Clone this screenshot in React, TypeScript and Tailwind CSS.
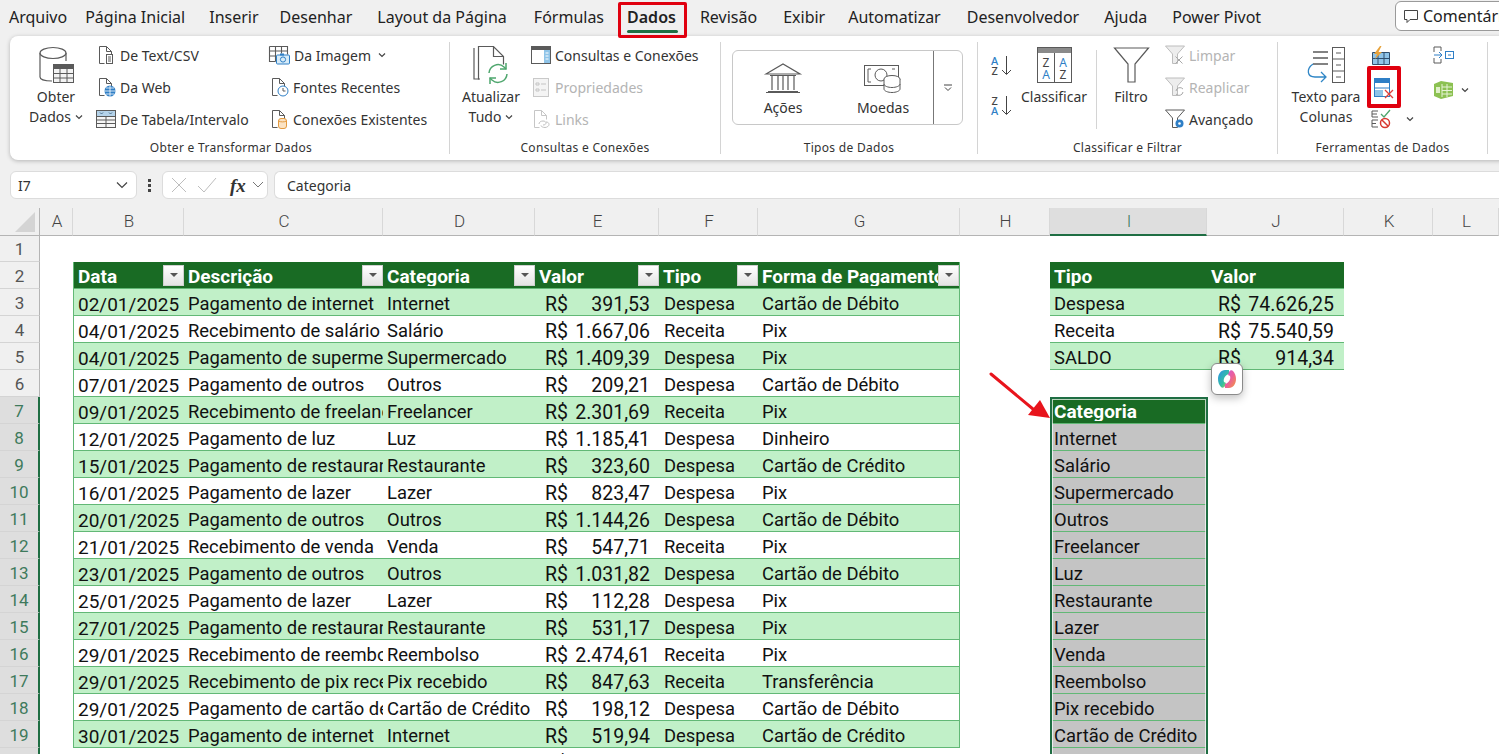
import type { ReactNode } from 'react'

const tabs = [
  ['Arquivo', ''],
  ['Página Inicial', 'ml-[18px]'],
  ['Inserir', 'ml-[24px]'],
  ['Desenhar', 'ml-[21px]'],
  ['Layout da Página', 'ml-[25px]'],
  ['Fórmulas', 'ml-[27px]'],
  ['Dados', 'ml-[23px] font-semibold'],
  ['Revisão', 'ml-[24px]'],
  ['Exibir', 'ml-[26px]'],
  ['Automatizar', 'ml-[23px]'],
  ['Desenvolvedor', 'ml-[26px]'],
  ['Ajuda', 'ml-[25px]'],
  ['Power Pivot', 'ml-[25px]'],
]
const letters = ['A', 'B', 'C', 'D', 'E', 'F', 'G', 'H', 'I', 'J', 'K', 'L']

const rows = [
  ['02/01/2025', 'Pagamento de internet', 'Internet', '391,53', 'Despesa', 'Cartão de Débito'],
  ['04/01/2025', 'Recebimento de salário', 'Salário', '1.667,06', 'Receita', 'Pix'],
  ['04/01/2025', 'Pagamento de supermercado', 'Supermercado', '1.409,39', 'Despesa', 'Pix'],
  ['07/01/2025', 'Pagamento de outros', 'Outros', '209,21', 'Despesa', 'Cartão de Débito'],
  ['09/01/2025', 'Recebimento de freelancer', 'Freelancer', '2.301,69', 'Receita', 'Pix'],
  ['12/01/2025', 'Pagamento de luz', 'Luz', '1.185,41', 'Despesa', 'Dinheiro'],
  ['15/01/2025', 'Pagamento de restaurante', 'Restaurante', '323,60', 'Despesa', 'Cartão de Crédito'],
  ['16/01/2025', 'Pagamento de lazer', 'Lazer', '823,47', 'Despesa', 'Pix'],
  ['20/01/2025', 'Pagamento de outros', 'Outros', '1.144,26', 'Despesa', 'Cartão de Débito'],
  ['21/01/2025', 'Recebimento de venda', 'Venda', '547,71', 'Receita', 'Pix'],
  ['23/01/2025', 'Pagamento de outros', 'Outros', '1.031,82', 'Despesa', 'Cartão de Débito'],
  ['25/01/2025', 'Pagamento de lazer', 'Lazer', '112,28', 'Despesa', 'Pix'],
  ['27/01/2025', 'Pagamento de restaurante', 'Restaurante', '531,17', 'Despesa', 'Pix'],
  ['29/01/2025', 'Recebimento de reembolso', 'Reembolso', '2.474,61', 'Receita', 'Pix'],
  ['29/01/2025', 'Recebimento de pix recebido', 'Pix recebido', '847,63', 'Receita', 'Transferência'],
  ['29/01/2025', 'Pagamento de cartão de crédito', 'Cartão de Crédito', '198,12', 'Despesa', 'Cartão de Débito'],
  ['30/01/2025', 'Pagamento de internet', 'Internet', '519,94', 'Despesa', 'Cartão de Crédito'],
]
const categories = ['Internet', 'Salário', 'Supermercado', 'Outros', 'Freelancer', 'Luz', 'Restaurante', 'Lazer', 'Venda', 'Reembolso', 'Pix recebido', 'Cartão de Crédito']
const summary = [['Despesa', '74.626,25'], ['Receita', '75.540,59'], ['SALDO', '914,34']]

const g = '#5a5a5a'

function Svg({ w, h, children }: { w: number; h: number; children: ReactNode }) {
  return (
    <svg width={w} height={h} viewBox={`0 0 ${w} ${h}`} fill="none" className="shrink-0 overflow-visible">
      {children}
    </svg>
  )
}

function Chevron() {
  return (
    <svg width="8" height="6" viewBox="0 0 8 6" fill="none" className="shrink-0">
      <path d="M1 1.500l3 3 3-3" stroke="#444" strokeWidth="1.200" />
    </svg>
  )
}

const docPath = 'M3.500 1.500h7l5 5v4M3.500 1.500v17h5M10.500 1.500v5h5'

function SmallIcon({ name }: { name: string }) {
  switch (name) {
    case 'csv':
      return <Svg w={20} h={20}><path d={docPath} stroke={g} /><rect x="10.500" y="9.500" width="6" height="9" fill="#fff" stroke={g} /><path d="M12 12h3M12 14h3M12 16h3" stroke={g} /></Svg>
    case 'web':
      return <Svg w={20} h={20}><path d={docPath} stroke={g} /><circle cx="14" cy="14" r="5.500" fill="#2f7fc6" /><path d="M8.500 14h11M14 8.500v11M10 11h8M10 17h8" stroke="#fff" strokeWidth=".8" /></Svg>
    case 'tabela':
      return <Svg w={20} h={20}><rect x=".5" y="1.500" width="19" height="17" fill="#f6f6f6" stroke={g} /><rect x="1" y="2" width="18" height="5" fill="#b5d3ea" /><path d="M.5 7.500h19M.5 11h19M.5 14.500h19M10 7.500v11" stroke={g} /><path d="M4 3.500l1.500 1.500L7 3.500M13 3.500l1.500 1.500L16 3.500" stroke="#4a6f8c" /></Svg>
    case 'imagem':
      return <Svg w={21} h={20}><path d="M.5 1.500h18v8M.5 1.500v15h6M.5 6h18M.5 11h6M6.500 1.500v15M12.500 1.500v7" stroke={g} strokeWidth="1.100" /><rect x="7.500" y="10" width="13" height="9" rx="1" fill="#d8ecf8" stroke="#2f7fc6" /><rect x="11" y="8.500" width="4" height="2" fill="#2f7fc6" /><circle cx="14" cy="14.500" r="2.600" stroke="#2f7fc6" /></Svg>
    case 'recentes':
      return <Svg w={20} h={20}><path d={docPath} stroke={g} /><circle cx="14" cy="14" r="5" fill="#fff" stroke="#2f7fc6" /><path d="M14 11v3h2.500" stroke={g} /></Svg>
    case 'conexoes':
      return <Svg w={20} h={20}><path d={docPath} stroke={g} /><rect x="9.500" y="9.500" width="8" height="10" rx="2.500" fill="#fbe3c4" stroke="#e39a3f" /><path d="M9.500 12c2 1.200 6 1.200 8 0" stroke="#e39a3f" /></Svg>
    case 'consultas':
      return <Svg w={20} h={20}><rect x=".5" y="1.500" width="19" height="17" fill="#fff" stroke={g} /><rect x="1" y="2" width="18" height="3" fill={g} /><rect x="13" y="5" width="6" height="13" fill="#8fc4e8" /><path d="M14.500 8h3M14.500 11h3M14.500 14h3" stroke="#fff" /></Svg>
    case 'propriedades':
      return <Svg w={20} h={20}><rect x="2.500" y="1.500" width="15" height="18" fill="#f4f4f4" stroke="#c9c9c9" /><path d="M5 6h3v2H5zM5 12h3v2H5zM10 7h5M10 13h5" stroke="#c4c4c4" /></Svg>
    case 'links':
      return <Svg w={20} h={20}><path d={docPath} stroke="#c6c6c6" /><path d="M8 15c0-2 2-3 4-3s3 1 3 2-1 2-3 2M15 13c2 0 3 1 3 2.500s-2 3-4 3-4-1-4-2" stroke="#c0c0c0" /></Svg>
    case 'limpar':
      return <Svg w={20} h={20}><path d="M.5 1h19l-7 8v9.500h-5V9z" fill="#ededed" stroke="#bdbdbd" /><path d="M10.500 11.500l7 7M17.500 11.500l-7 7" stroke="#a8a8a8" /></Svg>
    case 'reaplicar':
      return <Svg w={20} h={20}><path d="M.5 1h19l-7 8v9.500h-5V9z" fill="#ededed" stroke="#bdbdbd" /><path d="M11 14a4 4 0 017-2M18 15a4 4 0 01-7 2" stroke="#a8a8a8" /></Svg>
    default:
      return <Svg w={20} h={20}><path d="M.5 1h19l-7 8v9.500h-5V9z" fill="#fff" stroke={g} /><circle cx="14.500" cy="14.500" r="4" fill="#2f7fc6" /><circle cx="14.500" cy="14.500" r="1.300" fill="#fff" /></Svg>
  }
}

function SmallItem({ icon, label, dim, chevron }: { icon: string; label: string; dim?: boolean; chevron?: boolean }) {
  return (
    <div className="flex h-[32px] items-center gap-[4px] pb-[2px] whitespace-nowrap">
      <SmallIcon name={icon} />
      <span className={dim ? 'text-[#b4b4b4]' : ''}>{label}</span>
      {chevron && <span className="ml-[3px]"><Chevron /></span>}
    </div>
  )
}

function BigButton({ icon, lines, className }: { icon: ReactNode; lines: ReactNode[]; className: string }) {
  return (
    <div className={`flex shrink-0 flex-col items-center ${className}`}>
      <div className="mt-[6px] flex h-[38px] items-center">{icon}</div>
      <div className="mt-[3px] flex flex-col items-center leading-[20px] whitespace-nowrap">
        {lines.map((l, i) => <div key={i} className="flex items-center gap-[4px]">{l}</div>)}
      </div>
    </div>
  )
}

function Group({ label, className, labelClass = '', children }: { label: string; className: string; labelClass?: string; children: ReactNode }) {
  return (
    <div className={`flex shrink-0 flex-col pt-[4px] ${className}`}>
      <div className="flex h-[98px] items-start">{children}</div>
      <div className={`h-[20px] text-center text-[12px] leading-[20px] tracking-[.3px] text-[#333] ${labelClass}`}>{label}</div>
    </div>
  )
}

function Sep() {
  return <div className="mt-[6px] h-[112px] w-px shrink-0 bg-[#d4d4d4]" />
}

function Ribbon() {
  return (
    <div className="ml-[10px] flex h-[124px] w-[1500px] rounded-lg bg-white text-[14px] text-[#333] shadow-[0_1px_4px_rgba(0,0,0,0.25)]">
      <Group label="Obter e Transformar Dados" className="w-[439px]" labelClass="pl-[3px]">
        <BigButton
          className="ml-[6px] w-[80px]"
          lines={['Obter', <>Dados <Chevron /></>]}
          icon={
            <Svg w={38} h={38}>
              <path d="M3 7v24c0 2 4 4 12 4M29 7v8" stroke={g} strokeWidth="1.200" />
              <ellipse cx="16" cy="7" rx="13" ry="5.500" stroke={g} strokeWidth="1.200" fill="#fff" />
              <rect x="16.500" y="18.500" width="20" height="18" fill="#f3f3f3" stroke={g} />
              <rect x="16.500" y="18.500" width="20" height="4.500" fill={g} />
              <path d="M23 23v13M30 23v13M17 27.500h19M17 32h19" stroke={g} />
            </Svg>
          }
        />
        <div className="w-[173px] shrink-0">
          <SmallItem icon="csv" label="De Text/CSV" />
          <SmallItem icon="web" label="Da Web" />
          <SmallItem icon="tabela" label="De Tabela/Intervalo" />
        </div>
        <div>
          <SmallItem icon="imagem" label="Da Imagem" chevron />
          <SmallItem icon="recentes" label="Fontes Recentes" />
          <SmallItem icon="conexoes" label="Conexões Existentes" />
        </div>
      </Group>
      <Sep />
      <Group label="Consultas e Conexões" className="w-[270px]">
        <BigButton
          className="ml-[11px] w-[60px]"
          lines={['Atualizar', <>Tudo <Chevron /></>]}
          icon={
            <Svg w={36} h={38}>
              <path d="M1 2v31h6" stroke={g} strokeWidth="1.200" />
              <path d="M5.500 33.500V.5h15l10 10v8M20.500.5v10h10" stroke={g} strokeWidth="1.200" />
              <path d="M16 27a9 9 0 0115-6l2 2M34 28a9 9 0 01-15 6l-2-2" stroke="#4ea66d" strokeWidth="1.500" />
              <path d="M33 17v6h-6M17 38v-6h6" stroke="#4ea66d" strokeWidth="1.500" />
            </Svg>
          }
        />
        <div className="ml-[10px]">
          <SmallItem icon="consultas" label="Consultas e Conexões" />
          <SmallItem icon="propriedades" label="Propriedades" dim />
          <SmallItem icon="links" label="Links" dim />
        </div>
      </Group>
      <Sep />
      <Group label="Tipos de Dados" className="w-[256px]">
        <div className="mt-[10px] ml-[11px] flex h-[75px] w-[231px] rounded-md border border-[#c8c8c8]">
          <div className="flex w-[100px] flex-col items-center pt-[12px]">
            <Svg w={36} h={30}>
              <path d="M1 11L18 1l17 10zM3 28.500h30M1 29.500h34M7 12v15M13 12v15M18 12v15M23 12v15M29 12v15M5 12.500h26" stroke={g} strokeWidth="1.200" />
            </Svg>
            <span className="mt-[4px]">Ações</span>
          </div>
          <div className="flex w-[100px] flex-col items-center pt-[12px]">
            <Svg w={38} h={30}>
              <rect x=".5" y="2.500" width="34" height="20" stroke={g} />
              <path d="M7 6H4v13h3M28 6h3" stroke={g} />
              <circle cx="17" cy="12" r="6" stroke={g} />
              <ellipse cx="28" cy="16" rx="8" ry="3.500" fill="#fff" stroke={g} />
              <path d="M20 16v10c0 2 4 3.500 8 3.500s8-1.500 8-3.500V16M20 21c0 2 4 3.500 8 3.500s8-1.500 8-3.500" fill="#fff" stroke={g} />
            </Svg>
            <span className="mt-[4px]">Moedas</span>
          </div>
          <div className="flex flex-1 items-center justify-center rounded-r-md border-l border-[#777]">
            <svg width="10" height="8" viewBox="0 0 10 8" fill="none"><path d="M1 1h8M2 3.500l3 3 3-3" stroke="#444" /></svg>
          </div>
        </div>
      </Group>
      <Sep />
      <Group label="Classificar e Filtrar" className="w-[299px]">
        <div className="mt-[15px] ml-[13px] flex w-[21px] shrink-0 flex-col gap-[19px]">
          <Svg w={21} h={21}><text x="0" y="9.500" fontSize="11" fontWeight="500" fill="#2f7fc6" fontFamily="Noto Sans">A</text><text x="0.5" y="20" fontSize="11" fontWeight="500" fill="#444" fontFamily="Noto Sans">Z</text><path d="M15.500 1v18M11 15l4.500 4.500 4.500-4.500" stroke="#444" /></Svg>
          <Svg w={21} h={21}><text x="0.5" y="9.500" fontSize="11" fontWeight="500" fill="#444" fontFamily="Noto Sans">Z</text><text x="0" y="20" fontSize="11" fontWeight="500" fill="#2f7fc6" fontFamily="Noto Sans">A</text><path d="M15.500 1v18M11 15l4.500 4.500 4.500-4.500" stroke="#444" /></Svg>
        </div>
        <BigButton
          className="ml-[8px] w-[68px]"
          lines={['Classificar']}
          icon={
            <Svg w={35} h={36}>
              <rect x=".5" y=".5" width="34" height="35" fill="#fff" stroke={g} />
              <rect x="1" y="1" width="33" height="5" fill="#8a8a8a" />
              <path d="M17.500 6v29" stroke={g} />
              <text x="9" y="20" textAnchor="middle" fontSize="12" fill="#444" fontFamily="Noto Sans">Z</text>
              <text x="9" y="32" textAnchor="middle" fontSize="12" fill="#2f7fc6" fontFamily="Noto Sans">A</text>
              <text x="26" y="20" textAnchor="middle" fontSize="12" fill="#2f7fc6" fontFamily="Noto Sans">A</text>
              <text x="26" y="32" textAnchor="middle" fontSize="12" fill="#444" fontFamily="Noto Sans">Z</text>
            </Svg>
          }
        />
        <div className="mt-[10px] ml-[8px] h-[79px] w-px shrink-0 bg-[#d4d4d4]" />
        <BigButton
          className="ml-[9px] w-[50px]"
          lines={['Filtro']}
          icon={<Svg w={35} h={36}><path d="M.5 1h34L21 17v18h-7V17z" fill="#fff" stroke={g} strokeWidth="1.200" /></Svg>}
        />
        <div className="ml-[9px]">
          <SmallItem icon="limpar" label="Limpar" dim />
          <SmallItem icon="reaplicar" label="Reaplicar" dim />
          <SmallItem icon="avancado" label="Avançado" />
        </div>
      </Group>
      <Sep />
      <Group label="Ferramentas de Dados" className="w-[209px]">
        <BigButton
          className="ml-[12px] w-[72px]"
          lines={['Texto para', 'Colunas']}
          icon={
            <Svg w={38} h={36}>
              <path d="M6 11h15M6 17h15M6 5h15" stroke={g} strokeWidth="1.300" />
              <rect x="25.500" y=".5" width="12" height="35" fill="#fff" stroke={g} />
              <path d="M25.500 12h12M25.500 24h12M29 6h5M29 18h5M29 30h5" stroke={g} />
              <path d="M6 17c-7 5-6 13 2 13h10M14 25l5 5-5 5" stroke="#2f86c6" strokeWidth="1.300" />
            </Svg>
          }
        />
        <div className="ml-[9px] flex w-[62px] shrink-0 flex-col">
          <div className="flex h-[26px] items-end">
            <Svg w={20} h={20}><rect x="2" y="7" width="16" height="11" fill="#8fc4e8" /><path d="M1.500 6.500h17v12h-17zM7 6.500v12M13 6.500v12M1.500 12.500h17" stroke="#2f4f6f" /><path d="M9 0L3 8h3l-2 5 7-7H7.500l3-6z" fill="#e8a23a" /></Svg>
          </div>
          <div className="mt-[11px] flex h-[24px] items-center pl-[3px]">
            <Svg w={20} h={22}><rect x=".5" y=".5" width="15" height="18" fill="#fff" stroke="#2f7fc6" /><rect x="1" y="1" width="14" height="4" fill="#2f7fc6" /><path d="M.5 10h15" stroke="#2f7fc6" /><rect x="1" y="12" width="8" height="6" fill="#8fc4e8" /><path d="M11 12l8 8M19 12l-8 8" stroke="#e0403a" strokeWidth="1.300" /></Svg>
          </div>
          <div className="mt-[8px] flex h-[20px] items-center">
            <Svg w={20} h={20}><path d="M7 2H1v6h6M7 11H1v7h6M1 5h5M1 14.500h4" stroke={g} /><path d="M10 5l3 3 6-7" stroke="#4ea66d" strokeWidth="1.300" /><circle cx="14" cy="14" r="4.500" fill="#fff" stroke="#d8382f" strokeWidth="1.500" /><path d="M11 11l6 6" stroke="#d8382f" strokeWidth="1.500" /></Svg>
            <span className="ml-[15px]"><Chevron /></span>
          </div>
        </div>
        <div className="flex flex-col">
          <div className="mt-[6px]">
            <Svg w={21} h={19}><path d="M8 1H1v5M1 12v5h7M8 1v4M8 13v4" stroke={g} /><path d="M1 9h8M6 6l3 3-3 3" stroke="#2f7fc6" /><rect x="12.500" y="5.500" width="8" height="7" stroke="#2f7fc6" /><path d="M15 9h3" stroke="#2f7fc6" /></Svg>
          </div>
          <div className="mt-[15px] flex items-center gap-[7px]">
            <Svg w={21} h={19}><path d="M1 4l7-3 12 2v13l-12 3-7-3z" fill="#8cc152" /><path d="M9 4v13M9 7h10M9 10.500h10M9 14h10M14 4v13" stroke="#e6f3d6" /><rect x="3" y="7" width="4" height="6" fill="#dff0c8" /></Svg>
            <Chevron />
          </div>
        </div>
      </Group>
      <Sep />
    </div>
  )
}

function FilterButton() {
  return (
    <div className="flex h-[21px] w-[21px] shrink-0 items-center justify-center self-center border border-[#d0d0d0] bg-gradient-to-b from-white to-[#e4e4e4]">
      <div className="h-0 w-0 border-x-[4px] border-t-[4px] border-x-transparent border-t-[#555]" />
    </div>
  )
}

function Head({ label, filter, className = '' }: { label: string; filter?: boolean; className?: string }) {
  return (
    <div className={`flex items-center overflow-hidden border-b border-[#62b876] bg-[#196b24] text-[19px] font-bold text-white ${className}`}>
      <span className="min-w-0 flex-1 overflow-hidden pt-[3px] pl-[4px] whitespace-nowrap">{label}</span>
      {filter && <FilterButton />}
    </div>
  )
}

function Money({ value, className = '' }: { value?: string; className?: string }) {
  return (
    <div className={`flex items-center justify-between overflow-hidden border-b border-[#62b876] pt-[5px] text-[19.5px] whitespace-nowrap ${className}`}>
      <span>R$</span>
      <span>{value}</span>
    </div>
  )
}

function RowHead({ n }: { n: number }) {
  const active = n >= 7
  return (
    <div className={`flex items-center justify-center border-b border-[#d4d4d4] pt-[2px] text-[17px] ${active ? 'border-r-2 border-r-[#1f6e43] bg-[#dedede] text-[#3e7a5c]' : 'border-r border-r-[#b4b4b4] bg-[#f0f0f0] text-[#555]'}`}>
      {n}
    </div>
  )
}

function Sheet() {
  return (
    <div className="grid auto-rows-[27px] grid-cols-[40px_33px_111px_199px_152px_124px_99px_202px_90px_157px_137px_89px_66px] font-[Roboto,sans-serif] text-[18.4px] leading-none text-[#111]">
      {/* column letters */}
      <div className="relative h-[28px] border-r border-b border-[#b4b4b4] bg-[#f0f0f0]">
        <div className="absolute right-[4px] bottom-[3px] h-0 w-0 border-b-[20px] border-l-[20px] border-b-[#d4d4d4] border-l-transparent" />
      </div>
      {letters.map((l) => (
        <div
          key={l}
          className={`flex h-[28px] items-center justify-center border-r border-b border-r-[#d8d8d8] pl-[2px] text-[17px] font-light ${l === 'I' ? 'border-b-2 border-b-[#1f6e43] bg-[#dedede] text-[#3e7a5c]' : 'border-b-[#b4b4b4] bg-[#f0f0f0] text-[#444]'}`}
        >
          {l}
        </div>
      ))}

      {Array.from({ length: 20 }, (_, i) => {
        const n = i + 1
        const band = n % 2 === 1 ? 'bg-[#c1f0c8]' : 'bg-white'
        const data = rows[n - 3]
        const side = summary[n - 3]
        const cell = `flex items-center overflow-hidden border-b border-[#62b876] pt-[5px] pl-[4px] whitespace-nowrap ${band}`
        return [
          <RowHead key={`h${n}`} n={n} />,
          <div key={`a${n}`} />,
          ...(n === 1
            ? [1, 2, 3, 4, 5, 6].map((k) => <div key={k} />)
            : n === 2
              ? [
                  <Head key="b" label="Data" filter className="border-l border-l-[#62b876]" />,
                  <Head key="c" label="Descrição" filter />,
                  <Head key="d" label="Categoria" filter />,
                  <Head key="e" label="Valor" filter />,
                  <Head key="f" label="Tipo" filter />,
                  <Head key="g" label="Forma de Pagamento" filter className="border-r border-r-[#62b876]" />,
                ]
              : data
                ? [
                    <div key="b" className={`${cell} border-l border-l-[#62b876] text-[19px]`}>{data[0]}</div>,
                    <div key="c" className={cell}>{data[1]}</div>,
                    <div key="d" className={cell}>{data[2]}</div>,
                    <Money key="e" value={data[3]} className={`pr-[9px] pl-[10px] ${band}`} />,
                    <div key="f" className={`${cell} pl-[5px]`}>{data[4]}</div>,
                    <div key="g" className={`${cell} border-r border-r-[#62b876]`}>{data[5]}</div>,
                  ]
                : [
                    <div key="b" />,
                    <div key="c" />,
                    <div key="d" />,
                    <Money key="e" className="pl-[10px]" />,
                    <div key="f" />,
                    <div key="g" />,
                  ]),
          <div key={`h-${n}`} />,
          ...(n === 2
            ? [<Head key="i" label="Tipo" />, <Head key="j" label="Valor" />]
            : side
              ? [
                  <div key="i" className={cell}>{side[0]}</div>,
                  <Money key="j" value={side[1]} className={`pr-[10px] pl-[11px] ${band}`} />,
                ]
              : n === 7
                ? [<Head key="i" label="Categoria" />, <div key="j" />]
                : n >= 8
                  ? [
                      <div key="i" className="flex items-center overflow-hidden border-b border-[#62b876] bg-[#c4c4c4] pt-[5px] pl-[4px] whitespace-nowrap">{categories[n - 8]}</div>,
                      <div key="j" />,
                    ]
                  : [<div key="i" />, <div key="j" />]),
          <div key={`k${n}`} />,
          <div key={`l${n}`} />,
        ]
      })}
    </div>
  )
}

export default function App() {
  return (
    <div className="relative h-[754px] w-[1499px] overflow-hidden bg-white font-['Noto_Sans',sans-serif]">
      <div className="bg-[#f0f0f0]">
        <div className="flex h-[36px] items-center pb-[2px] pl-[9px]">
          <div className="flex text-[16px] text-[#222]">
            {tabs.map(([t, c]) => (
              <span key={t} className={c}>{t}</span>
            ))}
          </div>
        </div>
        <Ribbon />
        <div className="mt-[11px] flex h-[28px] items-stretch pl-[10px] text-[14px] text-[#333]">
          <div className="flex w-[127px] items-center justify-between rounded-md border border-[#dcdcdc] bg-white pr-[7px] pl-[7px]">
            I7
            <svg width="14" height="8" viewBox="0 0 14 8" fill="none"><path d="M2 1.500l5 5 5-5" stroke="#444" strokeWidth="1.200" /></svg>
          </div>
          <div className="flex w-[25px] flex-col items-center justify-center gap-[2px]">
            <i className="h-[3px] w-[3px] bg-[#444]" />
            <i className="h-[3px] w-[3px] bg-[#444]" />
            <i className="h-[3px] w-[3px] bg-[#444]" />
          </div>
          <div className="flex w-[106px] items-center rounded-md border border-[#dcdcdc] bg-white pl-[7px]">
            <svg width="18" height="16" viewBox="0 0 18 16" fill="none"><path d="M2 1l14 14M16 1L2 15" stroke="#bdbdbd" /></svg>
            <svg width="20" height="16" viewBox="0 0 20 16" fill="none" className="ml-[9px]"><path d="M1 9l6 6L19 1" stroke="#bdbdbd" /></svg>
            <span className="ml-[13px] font-['Liberation_Serif',serif] text-[19px] leading-none font-bold text-[#333] italic">fx</span>
            <svg width="14" height="8" viewBox="0 0 14 8" fill="none" className="ml-[5px]"><path d="M2 1l5 5 5-5" stroke="#777" /></svg>
          </div>
          <div className="ml-[6px] flex flex-1 items-center rounded-l-md border border-r-0 border-[#dcdcdc] bg-white pl-[12px]">Categoria</div>
        </div>
        <div className="h-[9px]" />
      </div>

      <Sheet />

      {/* selection outline, annotations and floating copilot button */}
      <div className="pointer-events-none absolute top-[397px] left-[1050px] h-[380px] w-[158px] border-2 border-[#1f6e43]">
        <div className="h-full w-full border border-white/70" />
      </div>
      <div className="pointer-events-none absolute top-[2px] left-[618px] h-[36px] w-[69px] rounded-[2px] border-[3px] border-[#e0000f]">
        <div className="absolute right-[6px] bottom-[2px] left-[6px] h-[3px] rounded bg-[#1f6e43]" />
      </div>
      <div className="pointer-events-none absolute top-[66px] left-[1367px] h-[42px] w-[34px] rounded-[2px] border-[4px] border-[#e0000f]" />
      <div className="absolute top-[1px] left-[1395px] flex h-[30px] w-[120px] items-center gap-[4px] rounded-md border border-[#9a9a9a] bg-white pl-[7px] text-[16px] whitespace-nowrap text-[#222]">
        <svg width="16" height="16" viewBox="0 0 16 16" fill="none" className="shrink-0"><path d="M1.500 2.500h13v9H7l-3 3v-3H1.500z" stroke="#444" /></svg>
        Comentários
      </div>
      <svg width="70" height="60" viewBox="0 0 70 60" fill="none" className="absolute top-[368px] left-[985px]">
        <path d="M6 6l48 40" stroke="#e8141c" strokeWidth="3" strokeLinecap="round" />
        <path d="M65 50L43 47l12-15z" fill="#e8141c" />
      </svg>
      <div className="absolute top-[363px] left-[1211px] flex h-[32px] w-[32px] items-center justify-center rounded-md border border-[#8a8a8a] bg-white shadow-[0_3px_8px_rgba(0,0,0,0.25)]">
        <svg width="20" height="20" viewBox="0 0 20 20" fill="none">
          <defs>
            <linearGradient id="cpA" x1="0" y1="0" x2="1" y2="1"><stop offset="0" stopColor="#2a8fe8" /><stop offset=".6" stopColor="#35c2a0" /><stop offset="1" stopColor="#e8c23a" /></linearGradient>
            <linearGradient id="cpB" x1="0" y1="0" x2="1" y2="1"><stop offset="0" stopColor="#c85be0" /><stop offset=".5" stopColor="#ec5f9a" /><stop offset="1" stopColor="#f29a3a" /></linearGradient>
          </defs>
          <path d="M12 1H8C4 1 1 5 1 10c0 3 1 6 3 8 1 1 3 1 4-1l1-3-2-1c-1-3 1-7 5-8z" fill="url(#cpA)" />
          <path d="M8 19h4c4 0 7-4 7-9 0-3-1-6-3-8-1-1-3-1-4 1l-1 3 2 1c1 3-1 7-5 8z" fill="url(#cpB)" />
        </svg>
      </div>
    </div>
  )
}
